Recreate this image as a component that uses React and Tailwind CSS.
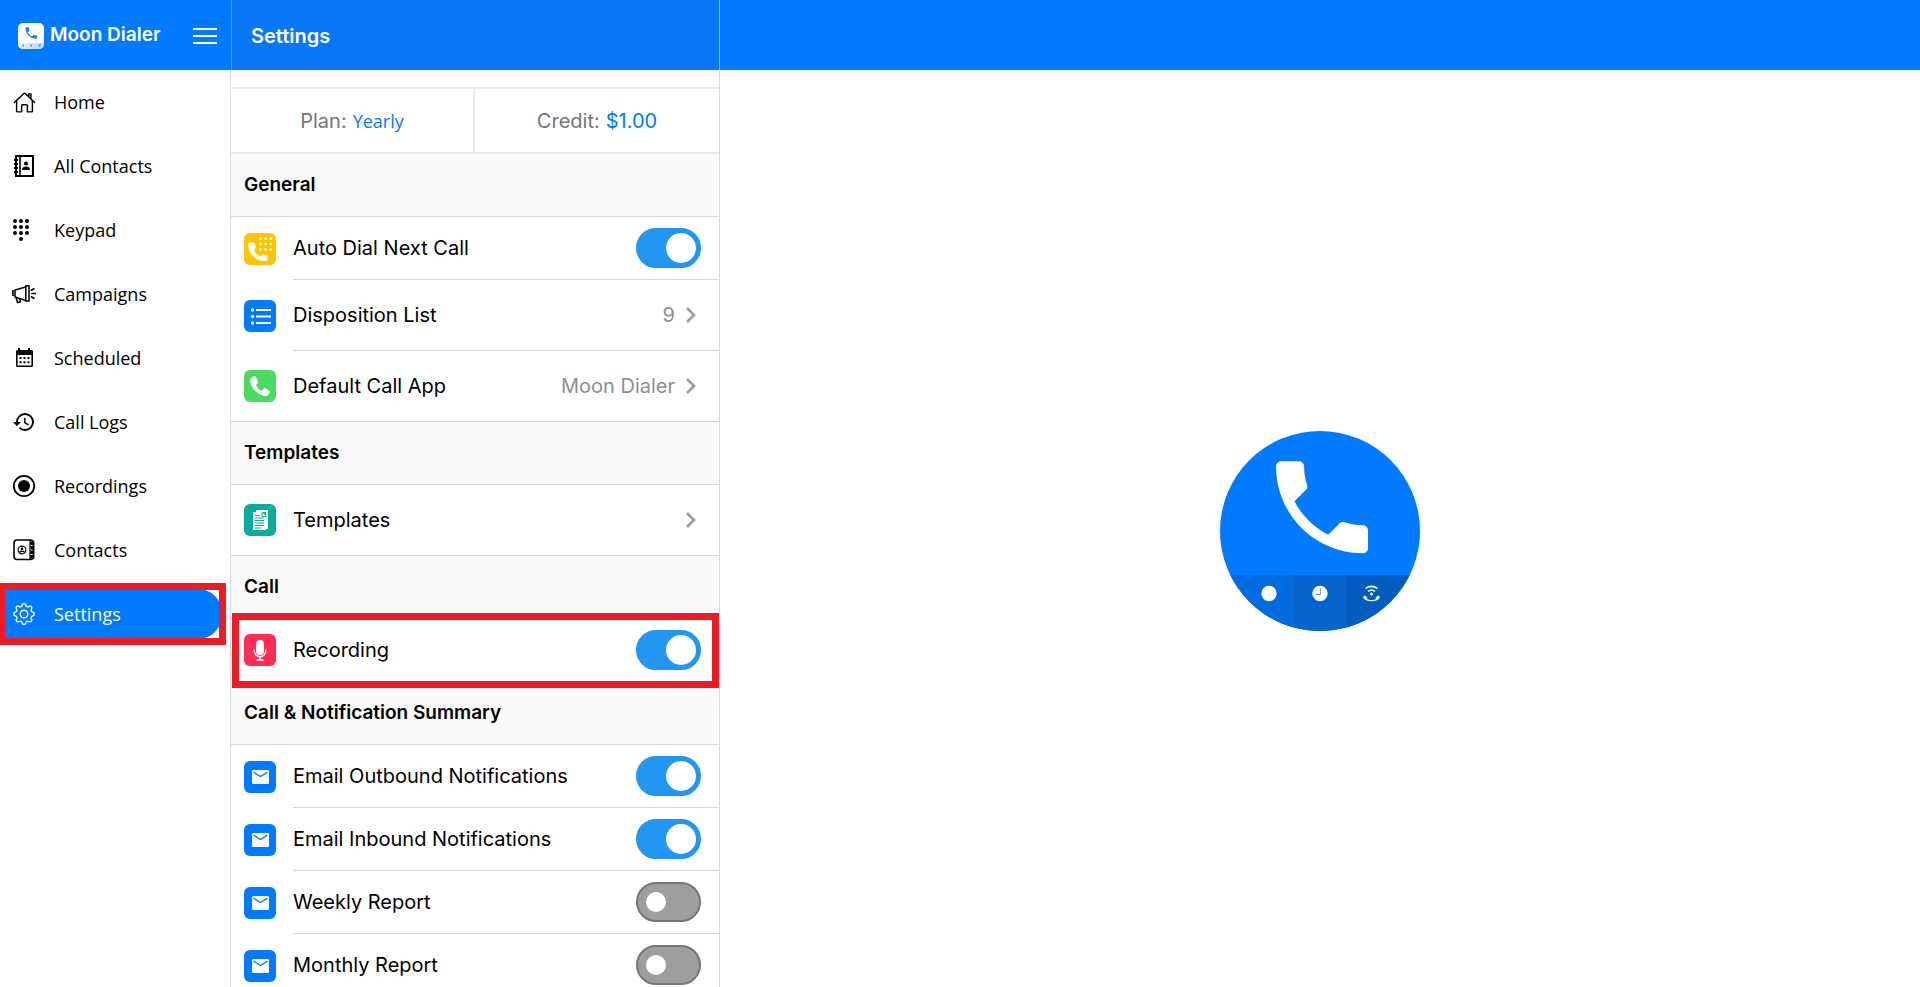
import React, { useState } from 'react';
import { IoHomeOutline } from 'react-icons/io5';
import { BsGear } from 'react-icons/bs';
import { MdHistory } from 'react-icons/md';

const CALL_PATH =
  'M6.62 10.79c1.44 2.83 3.76 5.14 6.59 6.59l2.2-2.2c.27-.27.67-.36 1.02-.24 1.12.37 2.33.57 3.57.57.55 0 1 .45 1 1V20c0 .55-.45 1-1 1-9.39 0-17-7.61-17-17 0-.55.45-1 1-1h3.5c.55 0 1 .45 1 1 0 1.25.2 2.45.57 3.57.11.35.03.74-.25 1.02l-2.2 2.2z';

// Sidebar icons
const AddressBookIcon = () => (
  <svg width="24" height="24" viewBox="0 0 24 24" fill="none" stroke="currentColor">
    <rect x="4" y="2" width="17" height="20" strokeWidth="2" />
    <path d="M8 2v20" strokeWidth="1.6" />
    <path d="M2 6h4M2 10h4M2 14h4M2 18h4" strokeWidth="2" />
    <circle cx="14" cy="9.6" r="2" fill="currentColor" stroke="none" />
    <path d="M10 16c0-2.6 1.9-3.6 4-3.6s4 1 4 3.600z" fill="currentColor" stroke="none" />
  </svg>
);

const KeypadIcon = () => (
  <svg width="24" height="24" viewBox="0 0 24 24" fill="currentColor">
    {[3, 9, 15].map((y) => [3, 9, 15].map((x) => <circle key={`${x}-${y}`} cx={x} cy={y} r="2" />))}
    <circle cx="9" cy="21" r="2" />
  </svg>
);

const MegaphoneIcon = () => (
  <svg width="24" height="24" viewBox="0 0 24 24" fill="none" stroke="currentColor" strokeWidth="1.5">
    <path d="M1 8v6" strokeWidth="1.6" />
    <path d="M13.5 5 3 8v7l10.5 3.5" />
    <rect x="13.8" y="3.8" width="3.2" height="15.2" />
    <path d="M4 15.3 5.5 20.5 8.5 19.8 7.6 16.8" />
    <path d="M18.8 8.5 22.5 6.5M19.3 11.5H24M18.8 14.5 22.5 16.5" />
  </svg>
);

const CalendarIcon = () => (
  <svg width="24" height="24" viewBox="0 0 24 24" fill="currentColor">
    <path
      fillRule="evenodd"
      d="M6 2h2v2h8V2h2v2h1.5A1.5 1.5 0 0 1 21 5.5v14a1.5 1.5 0 0 1-1.5 1.5h-14A1.5 1.5 0 0 1 4 19.5v-14A1.5 1.5 0 0 1 5.5 4H6zM5.6 9v10.400h13.800V9z"
    />
    <path d="M7.5 11h2v2h-2zM11.5 11h2v2h-2zM15.5 11h2v2h-2zM7.5 15.3h2v2h-2zM11.5 15.3h2v2h-2zM15.5 15.3h2v2h-2z" />
  </svg>
);

const RecordIcon = () => (
  <svg width="24" height="24" viewBox="0 0 24 24" fill="none">
    <circle cx="12" cy="12" r="10.2" stroke="currentColor" strokeWidth="1.8" />
    <circle cx="12" cy="12" r="6" fill="currentColor" />
  </svg>
);

const ContactCardIcon = () => (
  <svg width="24" height="24" viewBox="0 0 24 24" fill="none" stroke="currentColor">
    <rect x="2" y="2" width="19.5" height="19.5" rx="3" strokeWidth="1.6" />
    <path d="M18 2.5v19" strokeWidth="1.2" />
    <path d="M20.3 3.5v3.5M20.3 8v3.5M20.3 12.5v3.5M20.3 17v3.5" strokeWidth="4" />
    <circle cx="10" cy="12" r="3.9" strokeWidth="1.1" />
    <circle cx="10" cy="10.8" r="1.3" fill="currentColor" stroke="none" />
    <path d="M7.6 14.3c.6-1.4 4.2-1.4 4.8 0" strokeWidth="1.4" />
  </svg>
);

// Tile icons in the settings list
const AutoDialIcon = () => (
  <svg width="32" height="32" viewBox="0 0 32 32" fill="#fff">
    <path d="M7.2 9.5c-1.600-.2-3.200.1-3.200 2 0 8 6.500 16.500 16.500 16.500 1.500 0 3-.4 3-2v-2.500c0-.8-.5-1.300-1.300-1.500l-3-.6c-.7-.1-1.200.1-1.600.6l-1.200 1.500c-3-1.500-5.300-3.800-6.600-6.500l1.300-1.200c.5-.4.700-1 .6-1.600l-.7-3.200c-.2-.8-.8-1.300-1.500-1.400z" />
    {[5.5, 11, 16.5].map((y) =>
      [16.5, 21.5, 27].map((x) => <circle key={`${x}-${y}`} cx={x} cy={y} r="1.3" />)
    )}
  </svg>
);

const ListIcon = () => (
  <svg width="32" height="32" viewBox="0 0 32 32" fill="#fff">
    {[10, 16.5, 23].map((y) => (
      <g key={y}>
        <circle cx="8.5" cy={y} r="1.7" />
        <rect x="12" y={y - 1} width="15" height="2" />
      </g>
    ))}
  </svg>
);

const HandsetIcon = () => (
  <svg width="32" height="32" viewBox="0 0 32 32" fill="#fff">
    <path d="M9.8 6.3 7.5 7.7C6 8.7 6 10.5 6.300 12c1.300 6.300 6.500 12 13 13.700 1.700.4 3.700.6 4.800-.8l1.600-2c.5-.7.400-1.500-.2-2l-3.700-2.500c-.7-.4-1.400-.3-1.900.2l-1.500 1.600c-.4.4-.9.4-1.400.2-2-1-3.700-2.800-4.600-4.700-.2-.5-.2-1 .2-1.400l1.200-1.200c.5-.5.500-1.200.2-1.900L11.700 6.800c-.4-.7-1.200-.9-1.900-.5z" />
  </svg>
);

const DocumentIcon = () => (
  <svg width="32" height="32" viewBox="0 0 32 32">
    <path d="M12 6h12v19h-2V8H12z" fill="#fff" />
    <path d="M9 8h9l4 4v14H9z" fill="#fff" />
    <path d="M18 7.5v5h4.5" fill="none" stroke="#0aad9c" strokeWidth="1" />
    <path
      d="M11 11.5h5M11 14h9M11 16.5h9M11 19h9M11 21.5h9M11 24h6"
      stroke="#0aad9c"
      strokeWidth="1"
    />
  </svg>
);

const MicIcon = () => (
  <svg width="32" height="32" viewBox="0 0 32 32" fill="none">
    <rect x="12" y="6" width="8" height="15" rx="4" fill="#fff" />
    <path d="M10.3 15.5v1.5a5.7 5.7 0 0 0 11.4 0v-1.5M16 23v3M12.5 26h7" stroke="#fff" strokeWidth="1.4" />
  </svg>
);

const MailIcon = () => (
  <svg width="32" height="32" viewBox="0 0 32 32">
    <rect x="8" y="9" width="17" height="14" rx="1.5" fill="#fff" />
    <path d="M9.5 11.2 16.5 15.5 23.5 11.2" fill="none" stroke="#007aff" strokeWidth="1.4" />
  </svg>
);

const ChevronIcon = () => (
  <svg width="12" height="16" viewBox="0 0 12 16" fill="none" stroke="#9c9c9c" strokeWidth="2.6">
    <path d="M2 1l7 7-7 7" />
  </svg>
);

const AppTile = () => (
  <svg width="26" height="26" viewBox="0 0 26 26">
    <defs>
      <linearGradient id="tileBar" x1="0" x2="1" y1="0" y2="0">
        <stop offset="0" stopColor="#e6f1ff" />
        <stop offset="1" stopColor="#b3d6ff" />
      </linearGradient>
      <clipPath id="tileClip">
        <rect width="26" height="26" rx="5" />
      </clipPath>
    </defs>
    <g clipPath="url(#tileClip)">
      <rect width="26" height="26" fill="#fff" />
      <rect y="20" width="26" height="6" fill="url(#tileBar)" />
      <circle cx="5" cy="22.5" r="1" fill="#3b8fe8" />
      <circle cx="13" cy="22.5" r="1" fill="#3b8fe8" />
      <circle cx="21.5" cy="22.5" r="1" fill="#3b8fe8" />
    </g>
    <path d={CALL_PATH} transform="translate(5.5 2.2) scale(.65)" fill="#1f80e8" />
  </svg>
);

const MoonDialerLogo = () => (
  <svg width="200" height="200" viewBox="0 0 200 200" role="img" aria-label="Moon Dialer">
    <defs>
      <clipPath id="logoClip">
        <circle cx="100" cy="100" r="100" />
      </clipPath>
    </defs>
    <g clipPath="url(#logoClip)">
      <rect width="200" height="200" fill="#007aff" />
      <rect y="144" width="74" height="56" fill="#006ce0" />
      <rect x="74" y="144" width="52" height="56" fill="#0565cc" />
      <rect x="126" y="144" width="74" height="56" fill="#035dc0" />
    </g>
    <path d={CALL_PATH} transform="translate(40.7 15) scale(5.11)" fill="#fff" />
    <circle cx="49" cy="162.5" r="7.7" fill="#fff" />
    <circle cx="100" cy="162.5" r="7.7" fill="#fff" />
    <path d="M100.3 157.5v6h-4.5" fill="none" stroke="#4a90dc" strokeWidth="1" />
    <g fill="none" stroke="#fff" strokeWidth="1.6">
      <path d="M145.5 157.5c3.500-2.800 8.500-2.800 12 0M148 160.5c2-1.700 5-1.700 7 0" />
    </g>
    <circle cx="151.5" cy="163" r="1.5" fill="#fff" />
    <path
      d="M145 164.5l2.500 2.300-.8 1.200c3 1.500 6.600 1.500 9.600 0l-.8-1.200 2.500-2.300c1.200.2 2 1.200 1.700 2.500-3.500 4.400-12.900 4.400-16.400 0-.3-1.300.5-2.300 1.700-2.500z"
      fill="#fff"
    />
  </svg>
);

const navItems = [
  { label: 'Home', icon: <IoHomeOutline size={23} /> },
  { label: 'All Contacts', icon: <AddressBookIcon /> },
  { label: 'Keypad', icon: <KeypadIcon /> },
  { label: 'Campaigns', icon: <MegaphoneIcon /> },
  { label: 'Scheduled', icon: <CalendarIcon /> },
  { label: 'Call Logs', icon: <MdHistory size={24} /> },
  { label: 'Recordings', icon: <RecordIcon /> },
  { label: 'Contacts', icon: <ContactCardIcon /> },
  { label: 'Settings', icon: <BsGear size={22} />, active: true },
];

const Sidebar = () => (
  <aside className="flex w-[231px] shrink-0 flex-col">
    <div className="flex h-[70px] items-center bg-[#007aff] pt-px pr-[14px] pl-[18px]">
      <AppTile />
      <span className="ml-[6px] font-['Inter',sans-serif] text-[19px] font-semibold text-white">Moon Dialer</span>
      <button type="button" aria-label="Toggle menu" className="ml-auto flex flex-col gap-[5px]">
        <span className="h-[2px] w-6 bg-white" />
        <span className="h-[2px] w-6 bg-white" />
        <span className="h-[2px] w-6 bg-white" />
      </button>
    </div>
    <nav className="flex-1 border-r border-[#d9d9d9]">
      {navItems.map((item) => (
        <NavItem key={item.label} {...item} />
      ))}
    </nav>
  </aside>
);

const NavItem = ({ label, icon, active }) => (
  <div className="relative flex h-16 items-center pr-2">
    <a
      href="#"
      className={`flex h-[50px] w-full items-center gap-[18px] rounded-r-3xl pl-3 font-['Open_Sans',sans-serif] text-lg ${
        active ? 'bg-[#007aff] text-white' : 'text-black'
      }`}
    >
      <span className="flex w-6 justify-center">{icon}</span>
      {label}
    </a>
    {active && (
      <div className="pointer-events-none absolute inset-y-px right-1 left-0 border-7 border-l-5 border-[#ed1c24]" />
    )}
  </div>
);

const SectionTitle = ({ children }) => (
  <h2 className="flex h-[63px] items-center border-b border-[#d6d6d6] bg-[#f9f9f9] pt-px pl-[13px] text-[19px] font-semibold">
    {children}
  </h2>
);

const Tile = ({ color, children }) => (
  <span className={`flex size-8 shrink-0 items-center justify-center rounded-md ${color}`}>{children}</span>
);

const ToggleRow = ({ id, label, color, icon, defaultOn, last, highlight }) => {
  const [on, setOn] = useState(defaultOn);

  return (
    <div className={`relative flex h-[63px] items-center gap-[17px] pl-[13px] ${last ? 'border-b border-[#d6d6d6]' : ''}`}>
      <Tile color={color}>{icon}</Tile>
      <div className={`flex h-full flex-1 items-center justify-between pr-[18px] ${last ? '' : 'border-b border-[#d6d6d6]'}`}>
        <label htmlFor={id}>{label}</label>
        <input
          id={id}
          type="checkbox"
          checked={on}
          onChange={(e) => setOn(e.target.checked)}
          className="flex h-10 w-[65px] appearance-none items-center rounded-full border-2 border-[#79747e] bg-[#9e9e9e] pl-2 before:size-5 before:rounded-full before:bg-white checked:justify-end checked:border-[#2196f3] checked:bg-[#2196f3] checked:pr-[3px] checked:before:size-[30px]"
        />
      </div>
      {highlight && (
        <div className="pointer-events-none absolute -top-[6px] right-0 -bottom-[7px] left-px z-10 border-7 border-[#ed1c24]" />
      )}
    </div>
  );
};

const LinkRow = ({ label, value, color, icon, last }) => (
  <a
    href="#"
    className={`flex h-[71px] items-center gap-[17px] pl-[13px] ${last ? 'border-b border-[#d6d6d6]' : ''}`}
  >
    <Tile color={color}>{icon}</Tile>
    <span className={`flex h-full flex-1 items-center pr-[22px] ${last ? '' : 'border-b border-[#d6d6d6]'}`}>
      <span>{label}</span>
      <span className="mr-[10px] ml-auto text-[#8e8e93]">{value}</span>
      <ChevronIcon />
    </span>
  </a>
);

const SettingsPanel = () => (
  <section className="flex w-[489px] shrink-0 flex-col font-['Inter',sans-serif] text-xl text-black">
    <div className="flex h-[70px] shrink-0 items-center border-x border-l-[#4d9ffb] border-r-[#8fc2fb] bg-[#0a77f9] pt-px pl-[19px]">
      <h1 className="text-xl font-semibold text-white">Settings</h1>
    </div>
    <div className="flex-1 overflow-y-auto border-r border-[#d9d9d9] [scrollbar-width:none]">
      <div className="mt-[17px] grid grid-cols-2 border-y-2 border-[#ebebeb]">
        <p className="flex h-[63px] items-center justify-center gap-[6px] border-r-2 border-[#ebebeb] pt-px text-[#757575]">
          Plan: <span className="font-['Open_Sans',sans-serif] text-lg text-[#007aff]">Yearly</span>
        </p>
        <p className="flex h-[63px] items-center justify-center gap-[6px] pt-px text-[#757575]">
          Credit: <span className="text-[#007aff]">$1.00</span>
        </p>
      </div>

      <SectionTitle>General</SectionTitle>
      <ToggleRow id="auto-dial" label="Auto Dial Next Call" color="bg-[#ffc400]" icon={<AutoDialIcon />} defaultOn />
      <LinkRow label="Disposition List" value="9" color="bg-[#007aff]" icon={<ListIcon />} />
      <LinkRow label="Default Call App" value="Moon Dialer" color="bg-[#4cd964]" icon={<HandsetIcon />} last />

      <SectionTitle>Templates</SectionTitle>
      <LinkRow label="Templates" color="bg-[#0aad9c]" icon={<DocumentIcon />} last />

      <SectionTitle>Call</SectionTitle>
      <ToggleRow id="recording" label="Recording" color="bg-[#ff2d55]" icon={<MicIcon />} defaultOn last highlight />

      <SectionTitle>Call &amp; Notification Summary</SectionTitle>
      <ToggleRow id="email-outbound" label="Email Outbound Notifications" color="bg-[#007aff]" icon={<MailIcon />} defaultOn />
      <ToggleRow id="email-inbound" label="Email Inbound Notifications" color="bg-[#007aff]" icon={<MailIcon />} defaultOn />
      <ToggleRow id="weekly" label="Weekly Report" color="bg-[#007aff]" icon={<MailIcon />} defaultOn={false} />
      <ToggleRow id="monthly" label="Monthly Report" color="bg-[#007aff]" icon={<MailIcon />} defaultOn={false} />
    </div>
  </section>
);

const App = () => (
  <div className="flex h-screen overflow-hidden bg-white">
    <Sidebar />
    <SettingsPanel />
    <main className="flex flex-1 flex-col">
      <div className="h-[70px] bg-[#007aff]" />
      <div className="flex flex-1 items-center justify-center pt-1">
        <MoonDialerLogo />
      </div>
    </main>
  </div>
);

export default App;
